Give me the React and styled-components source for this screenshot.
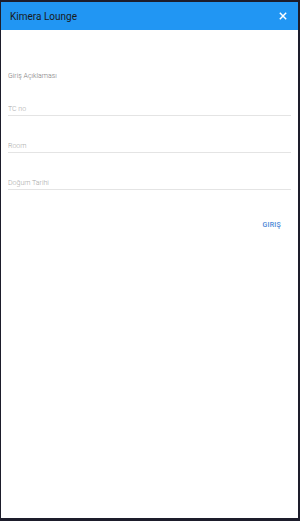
import React from "react";
import styled, { createGlobalStyle } from "styled-components";

const Global = createGlobalStyle`
  html, body {
    margin: 0;
    padding: 0;
    background: #1d1d2b;
  }
  * {
    box-sizing: border-box;
  }
`;

const Frame = styled.div`
  width: 300px;
  height: 521px;
  padding: 2px 2px 3px 1px;
  background: #1d1d2b;
`;

const Dialog = styled.div`
  height: 100%;
  background: #fff;
  display: flex;
  flex-direction: column;
  font-family: Roboto, "Liberation Sans", sans-serif;
`;

const Header = styled.div`
  height: 28px;
  flex-shrink: 0;
  background: #2196f3;
  display: flex;
  align-items: center;
  justify-content: space-between;
  padding: 0 10px 0 9px;
`;

const Title = styled.h1`
  margin: 0;
  font-size: 10px;
  font-weight: 400;
  color: #1a1a1a;
`;

const Close = styled.button`
  border: 0;
  background: none;
  padding: 0;
  width: 10px;
  height: 10px;
  display: flex;
  align-items: center;
  justify-content: center;
  cursor: pointer;
`;

const Body = styled.div`
  padding: 42px 7px 0 7px;
  display: flex;
  flex-direction: column;
`;

const Description = styled.p`
  margin: 0 0 24px 0;
  font-size: 7px;
  line-height: 9px;
  font-weight: 300;
  color: #7a7a7a;
`;

const Field = styled.label`
  display: block;
  border-bottom: 1px solid #e4e4e4;
  padding-bottom: 1px;
  margin-bottom: 26px;

  input {
    display: block;
    width: 100%;
    height: 9px;
    border: 0;
    outline: none;
    padding: 0;
    font-family: inherit;
    font-size: 7px;
    line-height: 9px;
    font-weight: 300;
    color: #333;
    background: transparent;
  }

  input::placeholder {
    color: #a8a8a8;
  }
`;

const Actions = styled.div`
  display: flex;
  justify-content: flex-end;
  padding: 0 10px 0 0;
  margin-top: 5px;
`;

const SubmitButton = styled.button`
  border: 0;
  background: none;
  padding: 0;
  font-family: inherit;
  font-size: 7px;
  line-height: 9px;
  font-weight: 500;
  letter-spacing: 0.2px;
  color: #4a86d6;
  cursor: pointer;
`;

const App = () => {
  return (
    <>
      <Global />
      <Frame>
        <Dialog>
          <Header>
            <Title>Kimera Lounge</Title>
            <Close aria-label="close">
              <svg width="8" height="8" viewBox="0 0 10 10">
                <path d="M1 1L9 9M9 1L1 9" stroke="#fff" strokeWidth="1.8" />
              </svg>
            </Close>
          </Header>
          <Body>
            <Description>Giriş Açıklaması</Description>
            <Field>
              <input placeholder="TC no" />
            </Field>
            <Field>
              <input placeholder="Room" />
            </Field>
            <Field>
              <input placeholder="Doğum Tarihi" />
            </Field>
            <Actions>
              <SubmitButton>GIRIŞ</SubmitButton>
            </Actions>
          </Body>
        </Dialog>
      </Frame>
    </>
  );
};

export default App;
